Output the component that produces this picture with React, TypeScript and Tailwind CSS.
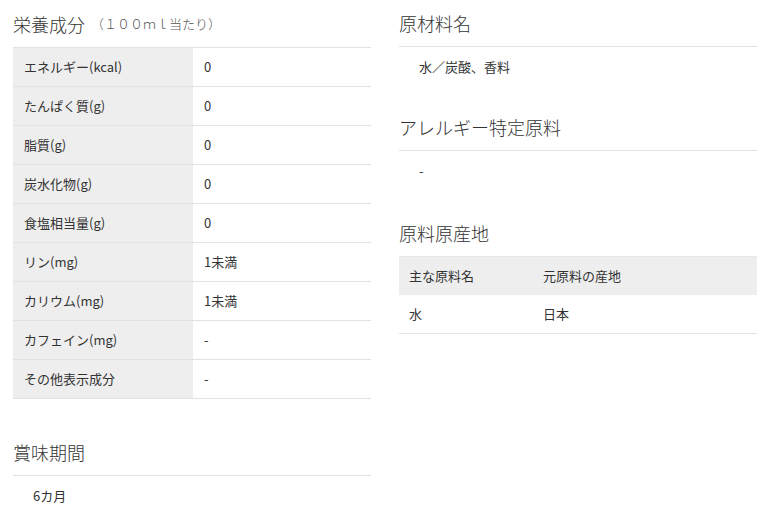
import React from "react";

const font = { fontFamily: '"Noto Sans CJK JP", "Noto Sans", sans-serif' };

const nutrition: [string, string][] = [
  ["エネルギー(kcal)", "0"],
  ["たんぱく質(g)", "0"],
  ["脂質(g)", "0"],
  ["炭水化物(g)", "0"],
  ["食塩相当量(g)", "0"],
  ["リン(mg)", "1未満"],
  ["カリウム(mg)", "1未満"],
  ["カフェイン(mg)", "-"],
  ["その他表示成分", "-"],
];

function Heading({ children }: { children: React.ReactNode }) {
  return (
    <div className="h-[47px] flex items-center text-[18px] font-light text-[#333] leading-none border-b border-[#e2e2e2]">
      {children}
    </div>
  );
}

function Plain({ children }: { children: React.ReactNode }) {
  return (
    <div className="h-[39px] flex items-center pl-[20px] text-[13px] text-[#333]">{children}</div>
  );
}

export default function App() {
  return (
    <div className="w-[765px] h-[518px] bg-white overflow-hidden" style={font}>
      <div className="flex gap-[28px] pl-[13px]">
        <div className="w-[358px] flex flex-col">
          <div className="h-[47px] flex items-center text-[#333] leading-none">
            <span className="text-[18px] font-light">栄養成分</span>
            <span className="text-[13px] font-light text-[#555] ml-[6px]">（１００ｍｌ当たり）</span>
          </div>
          <div className="border-t border-[#e2e2e2]">
            {nutrition.map(([k, v]) => (
              <div key={k} className="flex h-[39px] border-b border-[#e2e2e2] text-[13px] text-[#333]">
                <div className="w-[180px] bg-[#eeeeee] flex items-center pl-[11px]">{k}</div>
                <div className="flex-1 flex items-center pl-[11px]">{v}</div>
              </div>
            ))}
          </div>
          <div className="mt-[30px]">
            <Heading>賞味期間</Heading>
            <Plain>6カ月</Plain>
          </div>
        </div>
        <div className="w-[358px] flex flex-col">
          <Heading>原材料名</Heading>
          <Plain>水／炭酸、香料</Plain>
          <div className="mt-[18px]">
            <Heading>アレルギー特定原料</Heading>
            <Plain>-</Plain>
          </div>
          <div className="mt-[19px]">
            <div className="h-[47px] flex items-center text-[18px] font-light text-[#333] leading-none">原料原産地</div>
            <div className="text-[13px] text-[#333]">
              <div className="flex h-[39px] bg-[#eeeeee] border-t border-[#e8e8e8]">
                <div className="w-[144px] flex items-center pl-[10px]">主な原料名</div>
                <div className="flex-1 flex items-center">元原料の産地</div>
              </div>
              <div className="flex h-[39px] border-b border-[#e2e2e2]">
                <div className="w-[144px] flex items-center pl-[10px]">水</div>
                <div className="flex-1 flex items-center">日本</div>
              </div>
            </div>
          </div>
        </div>
      </div>
    </div>
  );
}
